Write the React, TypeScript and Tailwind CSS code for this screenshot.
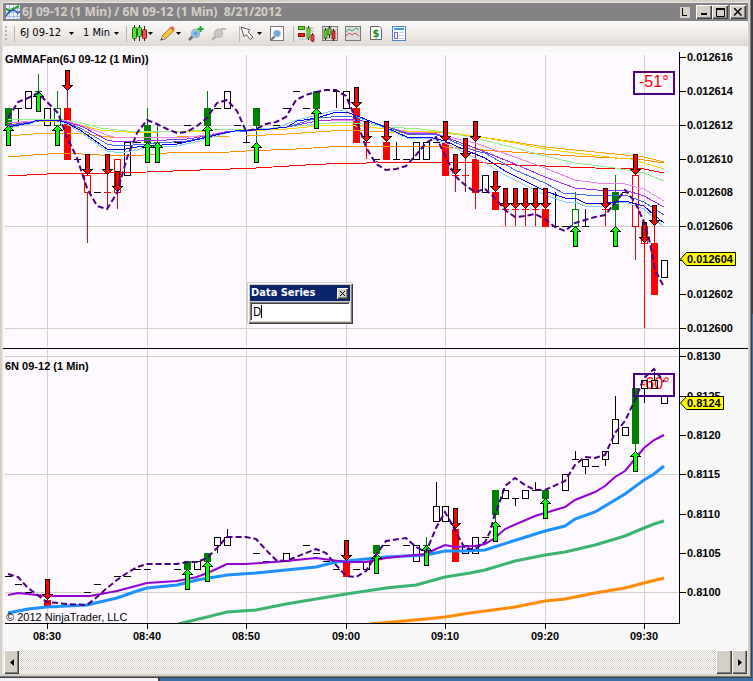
import React from "react";

type Bar = {
  m: number;
  lo: number;
  hi: number;
  wlo?: number;
  whi?: number;
  kind: "hollow" | "solid" | "dash";
  color?: "black" | "red" | "green";
  up?: number;
  down?: number;
};

const COLORS = { black: "#000000", red: "#ff0000", green: "#008000" };

const xAt = (m: number) => Math.ceil(46.99 + 9.95 * m);
const yTop = (p: number) => Math.round(327.5 - p * 16.9);
const yLow = (p: number) => Math.round(592.2 - p * 7.86);

const dash = (m: number, p: number, extra: Partial<Bar> = {}): Bar => ({ m, lo: p, hi: p, kind: "dash", ...extra });
const hollow = (m: number, lo: number, hi: number, extra: Partial<Bar> = {}): Bar => ({ m, lo, hi, kind: "hollow", ...extra });
const red = (m: number, lo: number, hi: number, extra: Partial<Bar> = {}): Bar => ({ m, lo, hi, kind: "solid", color: "red", ...extra });
const green = (m: number, lo: number, hi: number, extra: Partial<Bar> = {}): Bar => ({ m, lo, hi, kind: "solid", color: "green", ...extra });

// Prices in ticks above 0.012600
const yenBars: Bar[] = [
  green(-4, 12, 13, { up: 12 }),
  dash(-3, 13, { wlo: 12 }),
  hollow(-2, 13, 14),
  dash(-1, 14, { whi: 15, color: "green", up: 14 }),
  hollow(0, 12, 13),
  hollow(1, 12, 13, { whi: 14, color: "green", up: 12 }),
  red(2, 10, 13, { whi: 14.5, down: 14 }),
  dash(3, 10),
  hollow(4, 8, 9, { wlo: 5, color: "red", down: 9 }),
  dash(5, 8),
  dash(6, 8, { wlo: 7, whi: 9, color: "red", down: 9 }),
  hollow(7, 8, 10, { wlo: 7, color: "red", down: 8 }),
  hollow(8, 9, 11),
  dash(9, 11),
  green(10, 11, 12, { whi: 13, up: 11 }),
  dash(11, 11, { whi: 12, color: "green", up: 11 }),
  dash(13, 11),
  dash(14, 12),
  green(16, 12, 13, { whi: 14, up: 12 }),
  dash(17, 13),
  hollow(18, 13, 14),
  dash(19, 12),
  dash(20, 11, { whi: 11.7 }),
  green(21, 12, 13, { wlo: 11, up: 11 }),
  dash(23, 12),
  dash(24, 13),
  dash(25, 14),
  dash(26, 13),
  green(27, 13, 14, { up: 13 }),
  dash(29, 14, { wlo: 13 }),
  hollow(30, 13, 14),
  red(31, 11, 13, { down: 13 }),
  dash(32, 11, { wlo: 10, color: "red", down: 11 }),
  dash(33, 10),
  red(34, 10, 11, { down: 11 }),
  dash(35, 10, { whi: 11 }),
  dash(36, 10),
  hollow(37, 10, 11),
  hollow(38, 10, 11),
  dash(39, 11),
  red(40, 9, 11, { down: 11 }),
  dash(41, 9, { wlo: 8, color: "red", down: 9 }),
  dash(42, 9, { wlo: 8, whi: 10, color: "red", down: 10 }),
  red(43, 8, 10, { wlo: 7, whi: 11, down: 11 }),
  hollow(44, 8, 9),
  red(45, 7, 8, { down: 8 }),
  dash(46, 7, { wlo: 6, color: "red", down: 7 }),
  dash(47, 7, { wlo: 6, color: "red", down: 7 }),
  dash(48, 7, { wlo: 6, color: "red", down: 7 }),
  dash(49, 7, { wlo: 6, color: "red", down: 7 }),
  red(50, 6, 7, { down: 7 }),
  dash(51, 6, { whi: 8 }),
  dash(52, 6),
  hollow(53, 6, 7, { whi: 8, color: "green", up: 6 }),
  dash(54, 6, { whi: 7 }),
  dash(56, 7, { wlo: 6, color: "red", down: 7 }),
  green(57, 7, 8, { wlo: 6, whi: 9, up: 6 }),
  dash(58, 8),
  hollow(59, 6, 9, { wlo: 4, color: "red", down: 9 }),
  hollow(60, 5, 6, { wlo: 0, color: "red", down: 5 }),
  red(61, 2, 5, { whi: 6, down: 6 }),
  hollow(62, 3, 4),
];

// Prices in ticks above 0.8100
const kiwiBars: Bar[] = [
  dash(-4, 2),
  dash(-3, 1),
  dash(-2, 0),
  red(0, -1.7, -1, { down: -1 }),
  dash(4, 0),
  dash(5, 1),
  dash(7, 2),
  dash(8, 2),
  dash(9, 3),
  dash(10, 3),
  dash(13, 3),
  green(14, 3, 4, { up: 3 }),
  hollow(15, 3, 4),
  green(16, 4, 5, { up: 4 }),
  hollow(17, 6, 7, { wlo: 5 }),
  hollow(18, 6, 7, { whi: 8 }),
  dash(21, 5),
  dash(22, 4),
  dash(23, 4),
  hollow(24, 4, 5),
  dash(26, 6),
  dash(27, 5),
  dash(28, 4),
  dash(29, 3),
  red(30, 2, 4, { down: 4 }),
  dash(31, 3),
  hollow(32, 3, 4),
  green(33, 5, 6, { up: 5 }),
  dash(34, 6),
  dash(36, 6),
  hollow(37, 4, 6),
  dash(38, 6, { wlo: 5, whi: 7, color: "green", up: 6 }),
  hollow(39, 9, 11, { whi: 14 }),
  hollow(40, 9, 11),
  red(41, 4, 8, { down: 8 }),
  hollow(42, 5, 6),
  hollow(43, 5, 7),
  dash(44, 7),
  green(45, 10, 13, { wlo: 9, up: 9 }),
  hollow(46, 12, 13),
  dash(47, 12, { wlo: 11 }),
  hollow(48, 12, 13),
  dash(49, 13, { whi: 14 }),
  green(50, 12, 13, { up: 12 }),
  hollow(52, 13, 15),
  dash(53, 17, { whi: 18 }),
  hollow(54, 16, 17, { wlo: 15 }),
  dash(55, 16),
  hollow(56, 17, 18, { wlo: 16 }),
  hollow(57, 19, 22, { whi: 25 }),
  hollow(58, 20, 21),
  green(59, 19, 26, { wlo: 18, up: 18 }),
  hollow(60, 26, 27, { wlo: 24 }),
  hollow(61, 26, 27, { whi: 28 }),
  hollow(62, 24, 25),
];

const fan: { color: string; points: string }[] = [
  { color: "#ff0000", points: "8,176 47,174 107,173 147,172 200,170 230,169 256,168 306,165 346,163 366,163 376,162 486,163 515,165 545,166 595,168 644,169 664,173" },
  { color: "#ff8c00", points: "8,157 33,155 63,153 100,155 143,155 167,153 230,152 246,151 296,149 346,146 386,146 406,147 430,146 445,147 495,151 545,154 575,156 635,159 644,160 664,163" },
  { color: "#ffa500", points: "8,136 33,134 57,133 83,134 110,137 147,137 177,137 230,136 246,136 287,134 346,130 387,132 430,132 445,133 495,139 545,147 575,150 615,154 644,157 664,162" },
  { color: "#ffd700", points: "8,125 20,123 47,121 57,121 77,124 100,130 127,132 157,132 207,131 246,131 287,129 317,126 346,125 387,129 407,131 430,131 445,132 480,137 515,143 545,149 575,153 617,158 630,159 644,163 664,169" },
  { color: "#90ee90", points: "8,120 33,119 57,119 77,122 100,128 127,131 187,131 230,129 246,130 287,127 317,124 346,122 387,127 420,129 445,132 475,138 515,148 545,156 575,163 615,168 644,173 664,181" },
  { color: "#ee82ee", points: "8,123 47,120 67,121 83,126 107,135 117,138 147,137 180,138 207,135 230,131 246,131 287,127 317,121 346,120 363,121 387,127 407,132 427,133 445,136 475,143 515,157 545,168 575,180 597,183 625,184 644,189 664,201" },
  { color: "#9932f0", points: "8,125 47,120 67,122 83,127 107,140 117,142 137,141 167,140 187,139 207,136 230,131 246,131 287,127 317,121 346,119 363,121 387,127 407,133 437,134 445,137 475,148 515,164 545,177 575,188 597,190 625,190 644,196 664,207" },
  { color: "#4169e1", points: "8,126 38,121 57,120 67,123 82,129 107,144 117,146 133,145 187,141 207,137 230,132 246,131 287,127 317,118 346,116 363,119 387,127 407,134 437,135 445,138 475,151 485,153 515,170 545,183 563,193 575,194 597,196 625,195 644,202 664,215" },
  { color: "#87cefa", points: "8,128 30,124 38,120 57,120 67,124 80,132 107,151 120,153 137,150 147,147 177,146 200,141 230,132 250,130 276,128 297,120 317,115 336,110 346,111 360,118 387,129 407,138 433,139 445,143 465,153 485,163 505,175 525,185 545,195 565,202 575,202 585,206 603,206 625,202 644,209 664,227" },
  { color: "#0000ff", points: "8,127 30,123 38,120 57,120 67,123 80,130 107,149 120,150 137,147 147,146 177,144 200,139 220,134 235,131 270,129 287,127 297,121 317,118 336,112 346,112 360,117 387,128 407,137 433,138 445,141 465,150 485,158 505,171 525,181 545,191 565,198 575,198 585,203 603,203 625,201 644,206 654,215 664,223" },
];

const yenDash =
  "8,118 18,102 28,98 38,93 47,102 58,113 67,137 77,158 87,188 97,206 107,209 117,193 127,158 137,133 147,120 157,124 167,129 177,133 187,132 197,126 207,118 217,103 227,100 237,111 246,131 256,129 266,124 276,122 286,117 296,100 306,95 316,92 326,90 336,90 346,96 356,119 366,147 376,164 386,170 396,169 406,166 416,155 426,143 436,137 445,155 455,176 465,185 475,192 485,189 495,198 505,210 515,217 525,216 535,214 545,219 555,227 565,231 575,223 585,220 595,217 605,215 615,203 625,190 635,202 644,222 650,243 655,270 664,287";

const kiwiDash =
  "8,574 18,577 28,588 47,602 67,604 87,605 97,597 107,588 117,580 127,573 137,567 147,564 177,564 187,562 197,562 207,558 217,548 227,537 246,537 256,539 266,550 276,560 286,561 296,557 316,549 326,553 336,565 346,576 356,577 366,571 376,555 386,541 406,538 416,547 426,552 436,528 445,512 455,530 465,549 475,549 485,542 490,532 495,513 498,507 505,486 515,478 525,485 535,490 545,490 565,481 575,465 585,457 595,458 605,455 615,433 625,421 635,400 644,378 654,369 664,382";

const kiwiAverages = [
  { color: "#ff8c00", width: 3, points: "370,624 426,619 445,617 470,613 515,607 545,601 565,599 595,593 625,588 644,583 664,578" },
  { color: "#3cb371", width: 3, points: "178,624 207,617 227,612 256,610 286,604 316,599 346,594 386,588 416,585 445,577 470,573 485,570 515,561 545,555 565,552 595,545 625,536 644,528 654,524 664,521" },
  { color: "#1e90ff", width: 3, points: "8,613 28,609 47,607 87,605 117,598 137,591 147,588 177,585 197,580 227,575 256,573 316,567 336,562 366,559 386,557 426,555 445,551 465,551 485,550 513,541 545,531 565,526 575,519 595,512 625,494 644,480 654,474 664,466" },
  { color: "#9400d3", width: 2, points: "8,595 18,593 47,596 90,596 117,591 147,583 177,581 197,577 212,571 227,564 246,564 286,561 316,558 346,562 366,562 386,558 416,555 426,554 436,549 445,545 455,547 475,546 485,544 495,538 505,529 535,516 545,513 565,507 575,500 595,492 605,486 615,477 625,471 644,448 654,440 664,435" },
];

function Candle({ bar, y }: { bar: Bar; y: (p: number) => number }) {
  const x = xAt(bar.m);
  const color = COLORS[bar.color ?? "black"];
  const top = y(bar.hi);
  const bottom = y(bar.lo);
  return (
    <g>
      {bar.whi !== undefined && <rect x={x} y={y(bar.whi)} width="1" height={top - y(bar.whi)} fill={color} />}
      {bar.wlo !== undefined && <rect x={x} y={bottom} width="1" height={y(bar.wlo) - bottom} fill={color} />}
      {bar.kind === "dash" && <rect x={x - 3} y={top} width="7" height="1" fill={color} />}
      {bar.kind === "solid" && <rect x={x - 3} y={top} width="7" height={bottom - top + 1} fill={color} />}
      {bar.kind === "hollow" && (
        <rect x={x - 2.5} y={top + 0.5} width="6" height={bottom - top} fill="#fdf9fe" stroke={color} />
      )}
    </g>
  );
}

function Arrow({ bar, y }: { bar: Bar; y: (p: number) => number }) {
  const x = xAt(bar.m) + 0.5;
  return (
    <g strokeWidth="1" stroke="#000">
      {bar.up !== undefined && (
        <path transform={`translate(${x} ${y(bar.up) + 0.5})`} d="M0 0L5 5H2V20H-2V5H-5Z" fill="#00ff00" />
      )}
      {bar.down !== undefined && (
        <path transform={`translate(${x} ${y(bar.down) - 0.5})`} d="M0 0L5 -5H2V-20H-2V-5H-5Z" fill="#ff0000" />
      )}
    </g>
  );
}

const yenTicks = [16, 14, 12, 10, 8, 6, 4, 2, 0];
const kiwiTicks = [30, 25, 20, 15, 10, 5, 0];
const times = ["08:30", "08:40", "08:50", "09:00", "09:10", "09:20", "09:30"];

function Chart() {
  return (
    <svg
      viewBox="3 50 745 600"
      className="block h-auto w-full font-['Liberation_Sans',sans-serif]"
      role="img"
      aria-label="6J 09-12 and 6N 09-12 one minute charts"
    >
      <rect x="5" y="53" width="674" height="570" fill="#fdf9fe" />
      <g shapeRendering="crispEdges">
        {times.map((t, i) => (
          <g key={t} fill="#d4d0c8">
            <rect x={xAt(i * 10)} y="55" width="1" height="292" />
            <rect x={xAt(i * 10)} y="350" width="1" height="273" />
          </g>
        ))}
        {[12, 6, 0].map((p) => (
          <rect key={p} x="5" y={yTop(p)} width="674" height="1" fill="#d4d0c8" />
        ))}
        {[30, 15, 0].map((p) => (
          <rect key={p} x="5" y={yLow(p)} width="674" height="1" fill="#d4d0c8" />
        ))}
      </g>

      <g className="text-[16px]" fill="#ff0000">
        <text x="639" y="87">-51°</text>
        <text x="640" y="389">-60°</text>
      </g>

      <g shapeRendering="crispEdges">
        {yenBars.map((b) => (
          <Candle key={b.m} bar={b} y={yTop} />
        ))}
        {fan.map((l) => (
          <polyline key={l.color} points={l.points} fill="none" stroke={l.color} strokeWidth="1" />
        ))}
        {kiwiBars
          .filter((b) => b.m < 60)
          .map((b) => (
            <Candle key={b.m} bar={b} y={yLow} />
          ))}
        <g fill="none" stroke="#000">
          <path d="M644.5 388V403M654.5 372V380M641.5 380.5h6v8h-6zM651.5 380.5h6v8h-6zM661.5 395.5h6v8h-6z" />
        </g>
      </g>

      {kiwiAverages.map((l) => (
        <polyline key={l.color} points={l.points} fill="none" stroke={l.color} strokeWidth={l.width} />
      ))}
      <g shapeRendering="crispEdges">
        {yenBars.map((b) => (
          <Arrow key={b.m} bar={b} y={yTop} />
        ))}
        {kiwiBars.map((b) => (
          <Arrow key={b.m} bar={b} y={yLow} />
        ))}
      </g>
      <g fill="none" stroke="#4b0082" strokeWidth="2">
        <polyline points={yenDash} strokeDasharray="6 3" />
        <polyline points={kiwiDash} strokeDasharray="6 3" />
        <rect x="634" y="72" width="40" height="22" />
        <rect x="634" y="374" width="40" height="22" />
      </g>

      <rect x="3" y="624" width="745" height="26" fill="#f7f7f7" />
      <g shapeRendering="crispEdges" fill="#000">
        <rect x="679" y="52" width="1" height="572" />
        <rect x="3" y="348" width="745" height="1" />
        <rect x="5" y="623" width="675" height="1" />
        {yenTicks.map((p) => (
          <rect key={p} x="680" y={yTop(p)} width="6" height="1" />
        ))}
        {kiwiTicks.map((p) => (
          <rect key={p} x="680" y={yLow(p)} width="6" height="1" />
        ))}
        {times.map((t, i) => (
          <rect key={t} x={xAt(i * 10)} y="624" width="1" height="5" />
        ))}
      </g>

      <g className="text-[11px] font-bold" fill="#000">
        {yenTicks
          .filter((p) => p !== 4)
          .map((p) => (
            <text key={p} x="687" y={yTop(p) + 4}>{`0.0126${String(p).padStart(2, "0")}`}</text>
          ))}
        {kiwiTicks.map((p) => (
          <text key={p} x="687" y={yLow(p) + 4}>{`0.81${String(p).padStart(2, "0")}`}</text>
        ))}
        {times.map((t, i) => (
          <text key={t} x={xAt(i * 10)} y="640" textAnchor="middle">{t}</text>
        ))}
        <g fill="#ffff00" stroke="#000">
          <path d="M680.5 259L686.5 252.5H735.5V265.5H686.5Z" />
          <path d="M680.5 403L686.5 396.5H723.5V409.5H686.5Z" />
        </g>
        <text x="687" y="263">0.012604</text>
        <text x="687" y="407">0.8124</text>
        <text x="5" y="63">GMMAFan(6J 09-12 (1 Min))</text>
        <text x="5" y="370">6N 09-12 (1 Min)</text>
      </g>
      <text x="6" y="621" className="text-[11px]" fill="#000">© 2012 NinjaTrader, LLC</text>
    </svg>
  );
}

const Caret = () => (
  <svg width="5" height="3" viewBox="0 0 5 3" className="shrink-0" aria-hidden="true">
    <path d="M0 0H5L2.5 3Z" fill="#000" />
  </svg>
);

const Separator = () => <div className="h-4 w-px shrink-0 bg-[#b9b6b0]" />;

function Tool({ label, children, menu }: { label: string; children: React.ReactNode; menu?: boolean }) {
  return (
    <button type="button" aria-label={label} className="flex shrink-0 items-center">
      <svg width="17" height="17" viewBox="0 0 17 17" aria-hidden="true">
        {children}
      </svg>
      {menu && <Caret />}
    </button>
  );
}

const Lens = ({ faded }: { faded?: boolean }) => (
  <g>
    <path d="M2 15L6 11" stroke={faded ? "#b8b4b4" : "#6f7074"} strokeWidth="2.5" />
    <circle cx="8.5" cy="8.5" r="4" fill={faded ? "#c9c6c6" : "#8cc4ee"} stroke={faded ? "#bcb9b9" : "#a8b4c0"} strokeWidth="1.5" />
    {!faded && <circle cx="8.5" cy="8.5" r="2" fill="#5aa7e4" />}
  </g>
);

function Toolbar() {
  return (
    <div className="flex h-[25px] items-center bg-linear-to-b from-[#fcfaf9] to-[#dfdad5] pl-[2px] font-['DejaVu_Sans_Condensed','DejaVu_Sans',sans-serif] text-[11px] text-black">
      <div className="mr-[7px] h-4 w-[2px] shrink-0 bg-[repeating-linear-gradient(#b5b2ac_0_2px,transparent_2px_4px)]" />
      <Separator />
      <label className="ml-[5px] flex items-center gap-1">
        <select aria-label="Instrument" className="w-[45px] appearance-none bg-transparent">
          <option>6J 09-12</option>
        </select>
        <Caret />
      </label>
      <label className="ml-[9px] flex items-center gap-[3px]">
        <select aria-label="Interval" className="w-[28px] appearance-none bg-transparent">
          <option>1 Min</option>
        </select>
        <Caret />
      </label>
      <div className="ml-[7px] flex items-center gap-1">
        <Separator />
        <div className="flex items-center gap-[6px]">
          <Tool label="Chart style" menu>
            <path d="M3.5 0V16M8.500 0V16M13.500 1V16" stroke="#222" />
            <rect x="1.500" y="2.500" width="4" height="11" rx="1" fill="#5fe038" stroke="#1d6b12" />
            <rect x="6.500" y="2.500" width="4" height="9" rx="1" fill="#5fe038" stroke="#1d6b12" />
            <rect x="11.500" y="4.500" width="4" height="9" rx="1" fill="#f05050" stroke="#8d1010" />
          </Tool>
          <Tool label="Drawing tools" menu>
            <path d="M2 15L3.5 10.5L11.5 2.5L15 5.5L7 13.5Z" fill="#f6c73c" stroke="#9c7420" />
            <path d="M11 3L12.5 1.5Q14 1 15.500 3.500L14.500 6Z" fill="#ee5545" />
            <path d="M2 15L3.500 10.500L6.500 13.500Z" fill="#f5e2bd" stroke="#8b6d3a" strokeWidth=".6" />
            <path d="M1.500 15.500L2.500 13L4 14.500Z" fill="#333" />
          </Tool>
          <Tool label="Zoom in">
            <Lens />
            <path d="M13.500 1V7M10.500 4H16.500" stroke="#18b325" strokeWidth="2" />
          </Tool>
          <Tool label="Zoom out">
            <Lens faded />
            <path d="M11 4H16" stroke="#bcb9b9" strokeWidth="2" />
          </Tool>
        </div>
      </div>
      <div className="ml-3 flex items-center">
        <Separator />
        <Tool label="Cursor" menu>
          <path d="M1 2L10 5L8 7L13 12L10.500 14.500L6 9.500L4 11.500Z" fill="#fff" stroke="#555" />
        </Tool>
      </div>
      <div className="mr-[7px] ml-[7px]">
        <Tool label="Data box">
          <rect x="1.500" y="1.500" width="13" height="14" fill="#fff" stroke="#777" />
          <path d="M2 15L6 11" stroke="#6f7074" strokeWidth="2" />
          <circle cx="8" cy="8.500" r="3.500" fill="#69abe0" stroke="#b9c6d1" />
        </Tool>
      </div>
      <Separator />
      <div className="ml-1 flex items-center gap-[6px]">
        <Tool label="Chart trader">
          <path d="M7 3H16M7 6H16M7 10H16M1 14H16" stroke="#bbb" />
          <rect x=".5" y="1.500" width="6" height="3" fill="#5fdc28" stroke="#287a10" />
          <rect x=".5" y="8.500" width="6" height="3" fill="#e92020" stroke="#801010" />
          <path d="M10.500 1V15M14.500 8V17" stroke="#222" />
          <rect x="9" y="3" width="3" height="10" fill="#5fdc28" stroke="#287a10" strokeWidth=".7" />
          <rect x="13" y="10" width="3" height="6" fill="#e44" stroke="#811" strokeWidth=".7" />
        </Tool>
        <Tool label="Data series">
          <rect x="1.500" y="1.500" width="15" height="14" fill="#e4e2e0" stroke="#777" />
          <path d="M1 5H16M1 9H16M1 13H16" stroke="#bbb" />
          <path d="M4.500 3V15M8.500 1V13M12.500 4V16" stroke="#111" />
          <rect x="3" y="5" width="3" height="8" fill="#5fdc28" stroke="#174d0c" strokeWidth=".7" />
          <rect x="7" y="3" width="3" height="7" fill="#5fdc28" stroke="#174d0c" strokeWidth=".7" />
          <rect x="11" y="6" width="3" height="8" fill="#e33" stroke="#711" strokeWidth=".7" />
        </Tool>
        <Tool label="Indicators">
          <rect x="1.500" y="1.500" width="15" height="14" fill="#dcdcdc" stroke="#777" />
          <path d="M2 7L5 4L8 6L12 3L15 5" fill="none" stroke="#2fae5c" />
          <path d="M2 11L5 8L8 10L11 8L15 11" fill="none" stroke="#e44040" />
        </Tool>
        <Tool label="Strategies">
          <path d="M3.500 1.500H12.500L14.500 3.500V14.500H3.500Z" fill="#fff" stroke="#666" />
          <text x="9" y="12" textAnchor="middle" fill="#118a1c" className="text-[11px] font-bold">$</text>
        </Tool>
        <Tool label="Properties">
          <rect x="2.500" y="1.500" width="13" height="14" fill="#fff" stroke="#5b7fd4" />
          <rect x="4" y="3" width="10" height="2" fill="#3f9be8" />
          <rect x="4.500" y="7.500" width="3" height="6" fill="#fff" stroke="#7a63ee" />
          <path d="M9 7.500H14M9 10.500H14M9 13.500H14" stroke="#cdd3dc" />
        </Tool>
      </div>
    </div>
  );
}

const raised =
  "flex shrink-0 items-center justify-center bg-[#d4d0c8] shadow-[inset_1px_1px_#fff,inset_-1px_-1px_#404040,inset_-2px_-2px_#808080]";

function TitleBar() {
  return (
    <header className="flex h-[18px] items-center bg-[#858285] pr-[2px] pl-[3px]">
      <svg width="14" height="14" viewBox="0 0 14 14" className="shrink-0" aria-hidden="true">
        <rect width="14" height="14" fill="#e8f0fa" />
        <path d="M0 3.500H14M0 7.500H14M0 11.500H14M3.500 0V14M7.500 0V14M11.500 0V14" stroke="#a9bfe0" />
        <path d="M0 4L4 6L7 4L13 1" fill="none" stroke="#1ea01e" strokeWidth="2" />
        <path d="M0 11L4 6L8 5L12 8L14 6" fill="none" stroke="#2254b8" strokeWidth="1.500" />
      </svg>
      <h1 className="ml-[2px] flex-1 font-['Noto_Sans',sans-serif] text-[12px] leading-[18px] font-bold whitespace-pre text-[#d4d0c8]">
        {"6J 09-12 (1 Min) / 6N 09-12 (1 Min)  8/21/2012"}
      </h1>
      <button type="button" aria-label="Link" className="mr-[6px] flex h-[11px] w-[10px] items-center justify-center bg-[#d4d0c8]">
        <svg width="6" height="8" viewBox="0 0 6 8">
          <path d="M.5 0V7.500H5" fill="none" stroke="#000" />
        </svg>
      </button>
      <button type="button" aria-label="Minimize" className={`${raised} h-[14px] w-4`}>
        <svg width="8" height="8" viewBox="0 0 8 8">
          <path d="M1 6H7" stroke="#000" strokeWidth="2" />
        </svg>
      </button>
      <button type="button" aria-label="Maximize" className={`${raised} mr-[2px] h-[14px] w-4`}>
        <svg width="9" height="9" viewBox="0 0 9 9">
          <path d="M.5 0V8.500H8.500V0M0 1H9" fill="none" stroke="#000" />
          <path d="M0 1H9" stroke="#000" strokeWidth="2" />
        </svg>
      </button>
      <button type="button" aria-label="Close" className={`${raised} h-[14px] w-4`}>
        <svg width="8" height="8" viewBox="0 0 8 8">
          <path d="M0 0L7.500 7.500M7.500 0L0 7.500" stroke="#000" strokeWidth="1.500" />
        </svg>
      </button>
    </header>
  );
}

function DataSeriesWindow() {
  return (
    <section className="absolute top-[232px] left-[244px] w-[106px] bg-[#d4d0c8] p-[3px] font-['DejaVu_Sans_Condensed','DejaVu_Sans',sans-serif] shadow-[inset_1px_1px_#d4d0c8,inset_2px_2px_#fff,inset_-1px_-1px_#404040,inset_-2px_-2px_#808080]">
      <div className="flex h-4 items-center justify-between bg-[#0a246a] pr-[2px] pl-px">
        <label htmlFor="series" className="text-[11px] leading-4 font-bold text-white">
          Data Series
        </label>
        <button type="button" aria-label="Close Data Series" className={`${raised} h-[11px] w-[11px]`}>
          <svg width="5" height="5" viewBox="0 0 5 5">
            <path d="M0 0L5 5M5 0L0 5" stroke="#000" />
          </svg>
        </button>
      </div>
      <div className="relative mt-[1px] border border-t-[#808080] border-r-white border-b-white border-l-[#808080]">
        <input
          id="series"
          defaultValue="D"
          className="block h-[17px] w-full border-t border-l border-[#404040] bg-white pl-px text-[12px] leading-4 text-black outline-none"
        />
        <span className="absolute top-[2px] left-[10px] h-[13px] w-px bg-black" />
      </div>
    </section>
  );
}

function ScrollBar() {
  return (
    <div className="flex h-6 bg-[repeating-conic-gradient(#d4d0c8_0_25%,#ffffff_0_50%)] bg-[length:2px_2px] px-px">
      <button type="button" aria-label="Scroll left" className={`${raised} h-6 w-[15px]`}>
        <svg width="4" height="7" viewBox="0 0 4 7">
          <path d="M4 0V7L0 3.500Z" />
        </svg>
      </button>
      <div className="flex-1" />
      <div className={`${raised} h-6 w-4`} />
      <button type="button" aria-label="Scroll right" className={`${raised} h-6 w-[15px]`}>
        <svg width="4" height="7" viewBox="0 0 4 7">
          <path d="M0 0V7L4 3.500Z" />
        </svg>
      </button>
    </div>
  );
}

export default function App() {
  return (
    <div className="flex min-h-screen flex-col bg-[#3a6ea5]">
      <div className="flex">
        <main className="min-w-0 flex-1 border-r border-b border-[#404040]">
          <div className="border-r border-b border-[#808080]">
            <div className="border-t-2 border-r-2 border-b-2 border-l-2 border-[#d4d0c8]">
              <div className="border-t border-l border-[#e9e7e3] bg-[#f7f7f7]">
                <TitleBar />
                <Toolbar />
                <div className="relative mt-1">
                  <Chart />
                  <DataSeriesWindow />
                </div>
                <ScrollBar />
              </div>
            </div>
          </div>
        </main>
        <div className="flex w-px flex-col">
          <div className="h-[314px] bg-[#404448]" />
          <div className="flex-1 bg-[#3a6ea5]" />
        </div>
      </div>
      <div className="flex flex-1">
        <div className="w-[158px] bg-[#f4f2f6]" />
        <div className="w-[2px] bg-[#404040]" />
      </div>
    </div>
  );
}
